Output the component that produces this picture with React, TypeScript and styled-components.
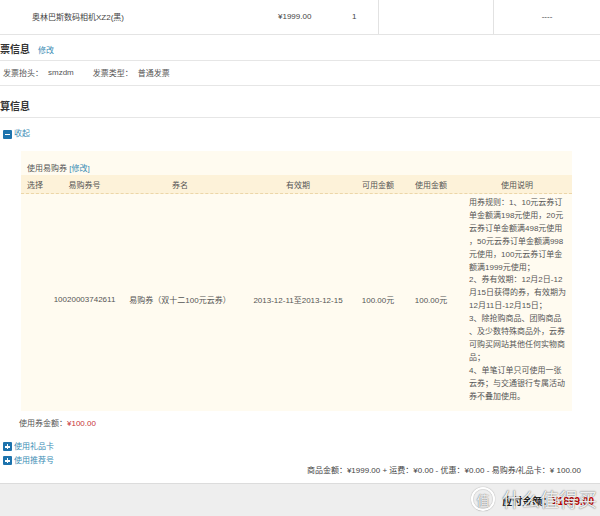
import React from 'react';
import styled, { createGlobalStyle } from 'styled-components';

const Global = createGlobalStyle`
  html, body { margin: 0; padding: 0; background: #fff; }
  body {
    font-family: "Liberation Sans", "Noto Sans CJK SC", sans-serif;
    font-size: 8px;
    color: #555;
  }
`;

const Page = styled.div`
  position: relative;
  width: 600px;
  height: 516px;
  overflow: hidden;
  display: flex;
  flex-direction: column;
`;

const ProductRow = styled.div`
  display: grid;
  grid-template-columns: 278px 74px 26px 115px 107px;
  height: 34px;
  border-bottom: 1px solid #e4e4e4;
  color: #444;
`;

const Cell = styled.div<{ $divider?: boolean; $center?: boolean; $pl?: number }>`
  display: flex;
  align-items: center;
  padding-bottom: 2px;
  padding-left: ${p => p.$pl ?? 0}px;
  justify-content: ${p => (p.$center ? 'center' : 'flex-start')};
  border-left: ${p => (p.$divider ? '1px solid #e2e2e2' : 'none')};
`;

const SectionHead = styled.div<{ $top: number; $bottom: number }>`
  display: flex;
  align-items: baseline;
  gap: 8px;
  padding: ${p => p.$top}px 0 ${p => p.$bottom}px;
  line-height: 13px;
  font-size: 10px;
  font-weight: bold;
  color: #333;
  border-bottom: 1px solid #e6e6e6;
`;

const Link = styled.span`
  color: #3b8db5;
  font-size: 8px;
  font-weight: normal;
`;

const InvoiceRow = styled.div`
  display: flex;
  align-items: center;
  height: 25px;
  padding: 0 0 1px 3px;
  box-sizing: border-box;
  border-bottom: 1px solid #e6e6e6;
  color: #555;
`;

const InvLabel = styled.span<{ $gap: number }>`
  margin-right: ${p => p.$gap}px;
`;

const Toggle = styled.div<{ $mt: number }>`
  display: flex;
  align-items: center;
  gap: 2px;
  padding-left: 3px;
  margin-top: ${p => p.$mt}px;
  line-height: 14px;
  color: #3b8db5;
`;

const SquareIcon = styled.span<{ $plus?: boolean }>`
  position: relative;
  display: inline-block;
  width: 9px;
  height: 9px;
  background: #1d73ad;
  border-radius: 1px;
  &::before {
    content: '';
    position: absolute;
    left: 2px;
    top: 4px;
    width: 5px;
    height: 1.5px;
    background: #fff;
  }
  &::after {
    content: '';
    display: ${p => (p.$plus ? 'block' : 'none')};
    position: absolute;
    left: 3.8px;
    top: 2px;
    width: 1.5px;
    height: 5px;
    background: #fff;
  }
`;

const Panel = styled.div`
  margin: 10px 0 0 21px;
  width: 551px;
  background: #fffbf0;
`;

const PanelTitle = styled.div`
  padding: 12px 6px 0;
  line-height: 12px;
  color: #555;
`;

const cols = '28px 71px 120px 116px 44px 62px 110px';

const HeadRow = styled.div`
  display: grid;
  grid-template-columns: ${cols};
  height: 18px;
  background: #fdf2d9;
  border-bottom: 1px dashed #ecd6a8;
  color: #555;
`;

const HeadCell = styled.div`
  display: flex;
  align-items: center;
  justify-content: center;
`;

const BodyRow = styled.div`
  display: grid;
  grid-template-columns: ${cols};
  color: #555;
`;

const BodyCell = styled.div`
  display: flex;
  align-items: center;
  justify-content: center;
  padding-bottom: 6px;
  white-space: nowrap;
`;

const Desc = styled.div`
  padding: 3px 4px 7px 7px;
  line-height: 12.9px;
  color: #555;
`;

const DescLine = styled.div`
  white-space: nowrap;
`;

const CouponTotal = styled.div`
  margin-top: 7px;
  padding-left: 19px;
  line-height: 12px;
  color: #555;
`;

const Red = styled.span`
  color: #c8343a;
`;

const LinksArea = styled.div`
  display: flex;
  margin-top: 10px;
`;

const LinkCol = styled.div`
  display: flex;
  flex-direction: column;
`;

const Summary = styled.div`
  margin-left: auto;
  margin-top: 25px;
  padding-right: 19px;
  line-height: 12px;
  color: #444;
  white-space: nowrap;
`;

const Footer = styled.div`
  flex: 1;
  margin-top: 6px;
  background: #eeeeee;
  border-top: 1px solid #dcdcdc;
  display: flex;
  justify-content: flex-end;
  padding: 11px 6px 0 0;
  line-height: 14px;
  font-size: 10px;
  font-weight: bold;
`;

const PayLabel = styled.span`
  color: #222;
`;

const PayAmount = styled.span`
  color: #c40000;
`;

const Watermark = styled.div`
  position: absolute;
  right: 3px;
  bottom: 5px;
  display: flex;
  align-items: center;
  gap: 7px;
  color: rgba(255, 255, 255, 0.9);
  text-shadow: 0 0 1px rgba(0, 0, 0, 0.55), 0 0 2px rgba(0, 0, 0, 0.25);
  pointer-events: none;
`;

const WmCircle = styled.span`
  width: 20px;
  height: 20px;
  border: 2px solid rgba(255, 255, 255, 0.95);
  box-shadow: 0 0 1px rgba(0, 0, 0, 0.5), inset 0 0 1px rgba(0, 0, 0, 0.5);
  border-radius: 50%;
  display: flex;
  align-items: center;
  justify-content: center;
  font-size: 13px;
  font-family: "Noto Sans CJK SC", sans-serif;
`;

const WmText = styled.span`
  font-size: 19px;
  line-height: 24px;
  font-family: "Noto Sans CJK SC", sans-serif;
`;

const descLines = [
  '用券规则：1、10元云券订',
  '单金额满198元使用，20元',
  '云券订单金额满498元使用',
  '，50元云券订单金额满998',
  '元使用，100元云券订单金',
  '额满1999元使用；',
  '2、券有效期：12月2日-12',
  '月15日获得的券，有效期为',
  '12月11日-12月15日；',
  '3、除抢购商品、团购商品',
  '、及少数特殊商品外，云券',
  '可购买网站其他任何实物商',
  '品；',
  '4、单笔订单只可使用一张',
  '云券；与交通银行专属活动',
  '券不叠加使用。',
];

const headers = ['选择', '易购券号', '券名', '有效期', '可用金额', '使用金额', '使用说明'];

export default function App() {
  return (
    <>
      <Global />
      <Page>
        <ProductRow>
          <Cell $pl={32}>奥林巴斯数码相机XZ2(黑)</Cell>
          <Cell>¥1999.00</Cell>
          <Cell>1</Cell>
          <Cell $divider />
          <Cell $divider $center>----</Cell>
        </ProductRow>

        <SectionHead $top={8} $bottom={3}>
          票信息<Link>修改</Link>
        </SectionHead>
        <InvoiceRow>
          <InvLabel $gap={5}>发票抬头：</InvLabel>
          <InvLabel $gap={19}>smzdm</InvLabel>
          <InvLabel $gap={5}>发票类型：</InvLabel>
          <InvLabel $gap={0}>普通发票</InvLabel>
        </InvoiceRow>

        <SectionHead $top={14} $bottom={4}>算信息</SectionHead>

        <Toggle $mt={9}>
          <SquareIcon />
          收起
        </Toggle>

        <Panel>
          <PanelTitle>
            使用易购券 <Link>[修改]</Link>
          </PanelTitle>
          <HeadRow>
            {headers.map(h => (
              <HeadCell key={h}>{h}</HeadCell>
            ))}
          </HeadRow>
          <BodyRow>
            <BodyCell />
            <BodyCell>10020003742611</BodyCell>
            <BodyCell>易购券（双十二100元云券）</BodyCell>
            <BodyCell>2013-12-11至2013-12-15</BodyCell>
            <BodyCell>100.00元</BodyCell>
            <BodyCell>100.00元</BodyCell>
            <Desc>
              {descLines.map((l, i) => (
                <DescLine key={i}>{l}</DescLine>
              ))}
            </Desc>
          </BodyRow>
        </Panel>

        <CouponTotal>
          使用券金额：<Red>¥100.00</Red>
        </CouponTotal>

        <LinksArea>
          <LinkCol>
            <Toggle $mt={0}>
              <SquareIcon $plus />
              使用礼品卡
            </Toggle>
            <Toggle $mt={0}>
              <SquareIcon $plus />
              使用推荐号
            </Toggle>
          </LinkCol>
          <Summary>
            商品金额：¥1999.00 + 运费：¥0.00 - 优惠：¥0.00 - 易购券/礼品卡：¥ 100.00
          </Summary>
        </LinksArea>

        <Footer>
          <PayLabel>应付金额：</PayLabel>
          <PayAmount>¥1899.00</PayAmount>
        </Footer>

        <Watermark>
          <WmCircle>值</WmCircle>
          <WmText>什么值得买</WmText>
        </Watermark>
      </Page>
    </>
  );
}
